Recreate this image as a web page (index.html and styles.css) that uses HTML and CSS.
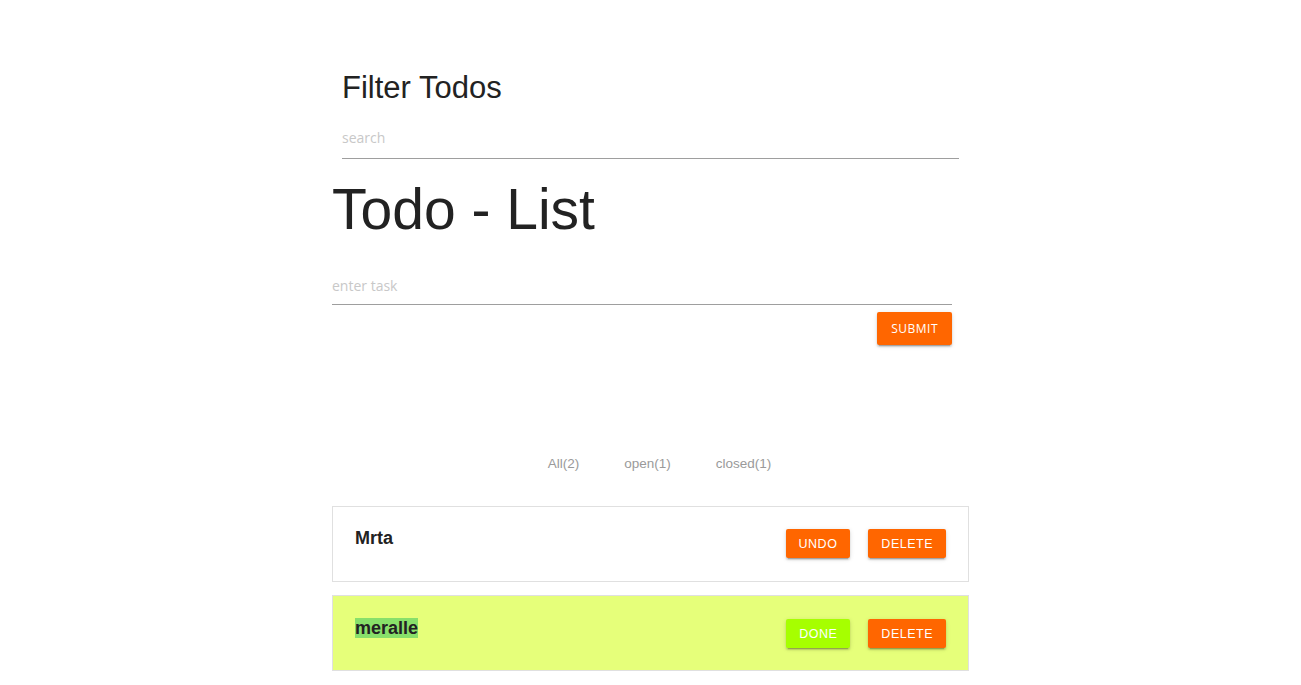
FILE: index.html
```html
<!DOCTYPE html>
<html>
<head>
<meta charset="utf-8">
<link rel="stylesheet" href="styles.css">
</head>
<body>
<div class="app">
  <section class="filter">
    <h2 class="filter-title">Filter Todos</h2>
    <input class="field search" type="text" placeholder="search">
  </section>
  <h1 class="title">Todo - List</h1>
  <form class="add">
    <input class="field task" type="text" placeholder="enter task">
    <div class="add-actions"><button type="button" class="btn">Submit</button></div>
  </form>
  <nav class="tabs">
    <a class="tab">All(2)</a>
    <a class="tab">open(1)</a>
    <a class="tab">closed(1)</a>
  </nav>
  <ul class="list">
    <li class="card">
      <span class="name">Mrta</span>
      <div class="actions">
        <button type="button" class="btn small">Undo</button>
        <button type="button" class="btn small">Delete</button>
      </div>
    </li>
    <li class="card done">
      <span class="name"><mark class="hl">meralle</mark></span>
      <div class="actions">
        <button type="button" class="btn small lime">Done</button>
        <button type="button" class="btn small">Delete</button>
      </div>
    </li>
  </ul>
</div>
</body>
</html>
```
FILE: styles.css
```css
* { box-sizing: border-box; }
html, body { margin: 0; padding: 0; background: #fff; }
body { font-family: "Liberation Sans", Arial, sans-serif; color: #222; }
.app { width: 637px; margin: 0 auto; display: flex; flex-direction: column; }
.filter { padding: 0 10px; margin-top: 68px; }
.filter-title { margin: 0; font-size: 31px; font-weight: 400; line-height: 40px; color: #222; }
.field {
  display: block; width: 100%; border: none; border-bottom: 1px solid #9e9e9e;
  outline: none; background: transparent; padding: 0;
  font-family: "Open Sans", "Noto Sans", sans-serif; font-size: 14px; color: #222;
}
.field::placeholder { color: #c8c8c8; }
.search { height: 51px; padding-top: 8px; }
.title { margin: 10px 0 0; font-size: 57px; font-weight: 400; line-height: 80px; color: #222; }
.add { width: 620px; display: flex; flex-direction: column; }
.task { height: 56px; padding-top: 18px; }
.add-actions { display: flex; justify-content: flex-end; margin-top: 7px; }
.btn {
  border: none; border-radius: 2px; background: #ff6600; color: #fff;
  font-family: "Open Sans", "Noto Sans", sans-serif; font-size: 12px; letter-spacing: 0.5px;
  text-transform: uppercase; height: 33px; padding: 0 14px; cursor: pointer;
  box-shadow: 0 2px 2px 0 rgba(0,0,0,0.14), 0 1px 5px 0 rgba(0,0,0,0.12), 0 3px 1px -2px rgba(0,0,0,0.2);
}
.tabs { display: flex; justify-content: center; gap: 45px; margin-top: 110px; padding-left: 18px; }
.tab { font-size: 13.5px; color: #9a9a9a; line-height: 18px; }
.list { list-style: none; margin: 33px 0 0; padding: 0; display: flex; flex-direction: column; gap: 13px; }
.card {
  height: 76px; border: 1px solid #e0e0e0; background: #fff;
  display: flex; justify-content: space-between; align-items: flex-start;
  padding: 20px 22px 0 22px;
}
.card.done { background: #e6ff7a; }
.name { font-size: 18px; font-weight: 700; line-height: 22px; color: #222; }
.card.done .name { margin-top: 1px; }
.hl { background: #88e06a; color: #222; padding: 0; }
.actions { display: flex; gap: 18px; margin-top: 2px; }
.card.done .actions { margin-top: 3px; }
.btn.small { height: 29px; padding: 0 13px; font-family: "Liberation Sans", Arial, sans-serif; font-size: 12.5px; letter-spacing: 0.5px; }
.btn.lime { background: #a6ff00; }
```
